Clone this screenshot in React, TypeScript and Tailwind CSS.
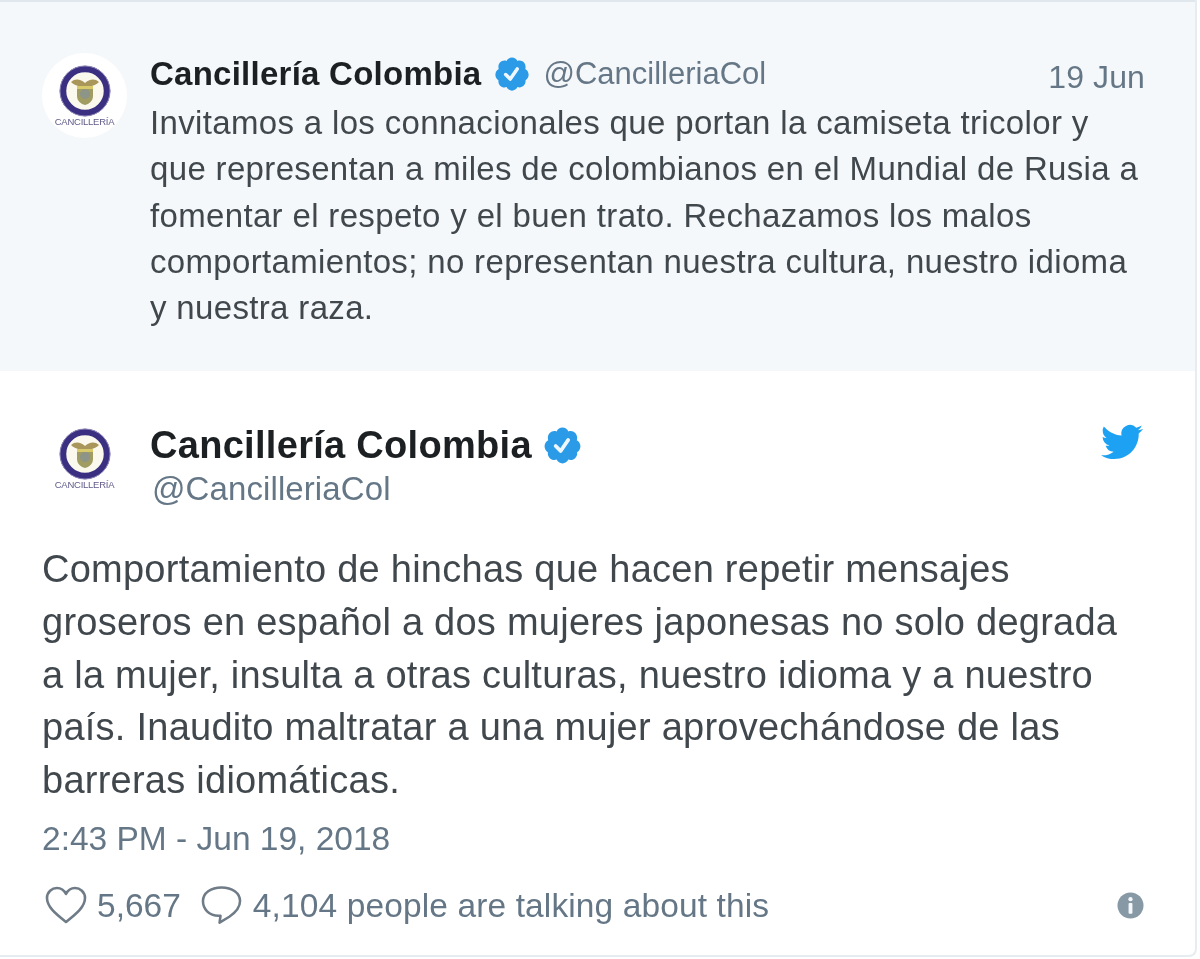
const sans = "font-['Liberation_Sans',Arial,sans-serif]"

const badgePath =
  "M22.5 12.5c0-1.58-.875-2.95-2.148-3.6.154-.435.238-.905.238-1.4 0-2.21-1.71-3.998-3.818-3.998-.47 0-.92.084-1.336.25C14.818 2.415 13.51 1.5 12 1.5s-2.816.917-3.437 2.25c-.415-.165-.866-.25-1.336-.25-2.11 0-3.818 1.79-3.818 4 0 .494.083.964.237 1.4-1.272.65-2.147 2.018-2.147 3.6 0 1.495.782 2.798 1.942 3.486-.02.17-.032.34-.032.514 0 2.21 1.708 4 3.818 4 .47 0 .92-.086 1.335-.25.62 1.334 1.926 2.25 3.437 2.25 1.512 0 2.818-.916 3.437-2.25.415.163.865.248 1.336.248 2.11 0 3.818-1.79 3.818-4 0-.174-.012-.344-.033-.513 1.158-.687 1.943-1.99 1.943-3.484zm-6.616-3.334l-4.334 6.5c-.145.217-.382.334-.625.334-.143 0-.288-.04-.416-.126l-.115-.094-2.415-2.415c-.293-.293-.293-.768 0-1.06s.768-.294 1.06 0l1.77 1.767 3.825-5.74c.23-.345.696-.436 1.04-.207.346.23.44.696.21 1.04z"

function Verified({ className }: { className: string }) {
  return (
    <svg viewBox="0 0 24 24" className={className}>
      <path d={badgePath} fill="#2b9be8" />
      <path d="M8 12.3l2.9 2.9 4.4-6.4" fill="none" stroke="#eef7fd" strokeWidth="2.2" strokeLinecap="round" strokeLinejoin="round" />
    </svg>
  )
}

// Blurry coat of arms with the small caption under it
function Emblem() {
  return (
    <div className="flex w-[85px] flex-col items-center">
      <svg viewBox="0 0 52 52" className="h-[52px] w-[52px]">
        <circle cx="26" cy="26" r="22" fill="#fbf9ee" stroke="#3a2f80" strokeWidth="6.5" />
        <circle cx="26" cy="26" r="25" fill="none" stroke="#8f88b8" strokeWidth="1" />
        <path d="M12 17c4-4 10-3 14 1 4-4 10-5 14-1-3 3-7 5-14 4-7 1-11-1-14-4z" fill="#a8965a" />
        <path d="M18 21h16v10c0 5-4 8-8 9-4-1-8-4-8-9z" fill="#a09c62" />
        <circle cx="26" cy="29" r="5" fill="#8d9488" />
        <path d="M18 21h16v3H18z" fill="#d8c96a" />
      </svg>
      <span className={`${sans} text-[9.5px] leading-[10px] tracking-[-0.25px] text-[#5f5b8a]`}>CANCILLERÍA</span>
    </div>
  )
}

export default function App() {
  return (
    <div className={`${sans} h-[959px] w-[1200px] overflow-hidden bg-white blur-[0.5px]`}>
      <div className="h-[957px] w-[1197px] rounded-br-lg border-r-2 border-b-2 border-[#e6ecf0]">
        {/* parent tweet */}
        <div className="flex h-[371px] border-t-2 border-[#e1e8ed] bg-[#f5f8fa] pt-[51px] pl-[42px]">
          <div className="flex h-[85px] w-[85px] shrink-0 items-center justify-center rounded-full bg-white">
            <Emblem />
          </div>
          <div className="ml-[23px] w-[995px]">
            <div className="mt-[-3px] flex items-center">
              <span className="text-[33px] leading-[42px] font-bold tracking-[0.25px] text-[#1c2022]">
                Cancillería Colombia
              </span>
              <Verified className="ml-[12px] h-[38px] w-[38px]" />
              <span className="ml-[12px] text-[31px] leading-[42px] text-[#657786]">@CancilleriaCol</span>
              <span className="mt-[6px] ml-auto text-[32px] leading-[42px] tracking-[0.1px] text-[#657786]">19 Jun</span>
            </div>
            <p className="mt-[2px] text-[33px] leading-[46.25px] tracking-[0.34px] text-[#41484d]">
              Invitamos a los connacionales que portan la camiseta tricolor y
              <br />
              que representan a miles de colombianos en el Mundial de Rusia a
              <br />
              fomentar el respeto y el buen trato. Rechazamos los malos
              <br />
              comportamientos; no representan nuestra cultura, nuestro idioma
              <br />y nuestra raza.
            </p>
          </div>
        </div>

        {/* main tweet */}
        <div className="pt-[50px] pr-[52px] pl-[42px]">
          <div className="flex">
            <div className="pt-[7px]">
              <Emblem />
            </div>
            <div className="ml-[23px] flex-1">
              <div className="flex items-center">
                <span className="text-[38px] leading-[48px] font-bold tracking-[0.3px] text-[#1c2022]">
                  Cancillería Colombia
                </span>
                <Verified className="ml-[10px] h-[41px] w-[41px]" />
                <svg viewBox="0 0 24 24" className="mt-[-6px] ml-auto h-[42px] w-[42px]">
                  <path
                    fill="#1da1f2"
                    d="M23.953 4.57a10 10 0 01-2.825.775 4.958 4.958 0 002.163-2.723c-.951.555-2.005.959-3.127 1.184a4.92 4.92 0 00-8.384 4.482C7.69 8.095 4.067 6.13 1.64 3.162a4.822 4.822 0 00-.666 2.475c0 1.71.87 3.213 2.188 4.096a4.904 4.904 0 01-2.228-.616v.06a4.923 4.923 0 003.946 4.827 4.996 4.996 0 01-2.212.085 4.936 4.936 0 004.604 3.417 9.867 9.867 0 01-6.102 2.105c-.39 0-.779-.023-1.17-.067a13.995 13.995 0 007.557 2.209c9.053 0 13.998-7.496 13.998-13.985 0-.21 0-.42-.015-.63A9.935 9.935 0 0024 4.59z"
                  />
                </svg>
              </div>
              <div className="mt-[-1px] ml-[2px] text-[33px] leading-[42px] tracking-[0.1px] text-[#657786]">
                @CancilleriaCol
              </div>
            </div>
          </div>

          <p className="mt-[33px] text-[38px] leading-[52.75px] tracking-[0.25px] text-[#41484d]">
            Comportamiento de hinchas que hacen repetir mensajes
            <br />
            groseros en español a dos mujeres japonesas no solo degrada
            <br />a la mujer, insulta a otras culturas, nuestro idioma y a nuestro
            <br />
            país. Inaudito maltratar a una mujer aprovechándose de las
            <br />
            barreras idiomáticas.
          </p>
          <div className="mt-[11px] text-[33.5px] leading-[42px] text-[#657786]">2:43 PM - Jun 19, 2018</div>

          <div className="mt-[25px] flex items-center text-[33.5px] leading-[42px] text-[#657786]">
            <svg viewBox="0 0 42 40" className="mt-[-1px] ml-[3px] h-[40px] w-[42px]" fill="none" stroke="#6f7c87" strokeWidth="2.6">
              <path d="M21 37C11 29 2 22 2 13 2 7 7 3 12 3c4 0 7 2 9 6 2-4 5-6 9-6 5 0 10 4 10 10 0 9-9 16-19 24z" strokeLinejoin="round" />
            </svg>
            <span className="ml-[10px]">5,667</span>
            <svg viewBox="0 0 42 40" className="mt-[-1px] ml-[20px] h-[40px] w-[41px]" fill="none" stroke="#6f7c87" strokeWidth="2.6">
              <path d="M18 31C8 31 2 24 2 16 2 8 10 2 21 2s19 6 19 14c0 7-5 12-11 16l-10 6 1-7z" strokeLinejoin="round" />
            </svg>
            <span className="ml-[11px] tracking-[0.12px]">4,104 people are talking about this</span>
            <svg viewBox="0 0 28 28" className="mr-[-1px] ml-auto h-[27px] w-[27px]">
              <circle cx="14" cy="14" r="13.5" fill="#8899a6" />
              <circle cx="14" cy="7.5" r="2.2" fill="#f5f8fa" />
              <rect x="12" y="11.5" width="4" height="11" rx="1" fill="#f5f8fa" />
            </svg>
          </div>
        </div>
      </div>
    </div>
  )
}
